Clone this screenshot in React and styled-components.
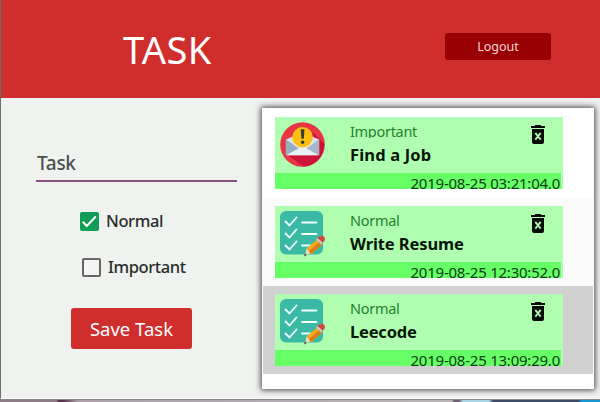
import React, { useState } from 'react';
import styled, { createGlobalStyle } from 'styled-components';

const GlobalStyle = createGlobalStyle`
  * { box-sizing: border-box; }
  body { margin: 0; overflow: hidden; font-family: "Noto Sans", "Open Sans", sans-serif; }
`;

const Screen = styled.div`
  width: 600px;
  height: 402px;
  display: flex;
  flex-direction: column;
  background: #f0f2f0;
  overflow: hidden;
`;

const Main = styled.div`
  flex: 1;
  min-height: 0;
  display: flex;
  flex-direction: column;
  border-left: 1px solid #687068;
  border-bottom: 1px solid #fafafa;
`;

const Header = styled.header`
  height: 98px;
  flex: none;
  display: flex;
  align-items: flex-start;
  justify-content: space-between;
  padding: 33px 49px 0 122px;
  background: #d02e2d;
`;

const Title = styled.h1`
  margin: 0;
  font-size: 38px;
  font-weight: 400;
  line-height: 32px;
  letter-spacing: 0.4px;
  color: #fff;
`;

const LogoutButton = styled.button`
  width: 106px;
  height: 27px;
  padding: 0;
  border: 0;
  border-radius: 3px;
  background: #990004;
  color: #f4d5d3;
  font: 400 12.5px/27px "Noto Sans", sans-serif;
`;

const Content = styled.main`
  flex: 1;
  min-height: 0;
  display: flex;
  align-items: flex-start;
  padding-top: 10px;
`;

const Form = styled.form`
  width: 260px;
  flex: none;
  display: flex;
  flex-direction: column;
  align-items: flex-start;
  padding: 39px 0 0 35px;
`;

const Field = styled.label`
  width: 201px;
  height: 35px;
  padding-left: 1px;
  border-bottom: 2px solid #87507f;
  color: #4b504d;
  font-size: 19px;
  font-weight: 500;
  line-height: 33px;
  letter-spacing: -0.3px;
`;

const Choice = styled.div`
  display: flex;
  align-items: center;
  gap: 7px;
  height: 24px;
  margin: ${(p) => p.$margin};
  color: #292e2b;
  font-size: 16.5px;
  font-weight: 500;
  line-height: 24px;
  letter-spacing: -0.4px;
`;

const Box = styled.span`
  width: 19px;
  height: 19px;
  flex: none;
  display: flex;
  border: ${(p) => (p.$checked ? '0' : '2px solid #656766')};
  border-radius: 2px;
  background: ${(p) => (p.$checked ? '#109d58' : '#f4f4f4')};
`;

const SaveButton = styled.button`
  width: 121px;
  height: 41px;
  margin: 29px 0 0 35px;
  padding: 0;
  border: 0;
  border-radius: 3px;
  background: #d02e2d;
  color: #fff;
  font: 400 18.5px/40px "Noto Sans", sans-serif;
`;

const Panel = styled.section`
  width: 332px;
  height: 281px;
  margin-left: 1px;
  border: 1px solid #fff;
  background: #fff;
  box-shadow: 0 0 6px 1px #3f3f3f;
`;

const Row = styled.div`
  height: 88px;
  padding: 8px 0 0 12px;
  background: ${(p) => p.$background};

  &:first-child { height: 89px; }
`;

const Card = styled.article`
  width: 288px;
  height: 72px;
  display: flex;
  flex-direction: column;
  background: #b0ffb0;
  overflow: hidden;
`;

const CardBody = styled.div`
  height: 56px;
  flex: none;
  display: flex;
  justify-content: space-between;
  padding: 5px 17px 0 5px;
`;

const Details = styled.div`
  flex: 1;
  margin-left: 24px;
`;

const Priority = styled.div`
  height: 16px;
  overflow: hidden;
  color: #20822b;
  font-size: 14.5px;
  line-height: 19px;
  letter-spacing: -0.3px;
`;

const TaskName = styled.div`
  height: 24px;
  margin-top: 5px;
  color: #07150a;
  font-size: 16.5px;
  font-weight: 700;
  line-height: 24px;
  letter-spacing: ${(p) => p.$spacing};
`;

const Stamp = styled.time`
  width: 286px;
  height: 16px;
  padding-right: 1px;
  background: #66ff66;
  color: #113d16;
  font-size: 15px;
  line-height: 20px;
  letter-spacing: -0.23px;
  text-align: right;
  white-space: nowrap;
`;

const DeleteButton = styled.button`
  width: 16px;
  height: 20px;
  margin-top: 3px;
  padding: 0;
  border: 0;
  background: none;
`;

const Icon = styled.svg`
  display: block;
  flex: none;
`;

const MailIcon = () => (
  <Icon width="46" height="46" viewBox="0 0 47 47">
    <circle cx="23" cy="23" r="22.8" fill="#e83545" />
    <path d="M33 10 45 22c1 13-9 23-21 23.5L7 33l29-12z" fill="#cf1238" />
    <path d="m6 18 9-4h16l9 4-17 14z" fill="#d8e4ed" />
    <path d="m13 17 20 0-2 9-8 4-8-4z" fill="#f6f7f5" />
    <path d="m6 18 17 11 17-11v16H6z" fill="#bccbd8" />
    <path d="m7 34 16-11 16 11z" fill="#e9f0f4" />
    <path d="m6 18 13 9L6 34z" fill="#94aec2" />
    <path d="m40 18-13 9 13 7z" fill="#a5b9ca" />
    <circle cx="23" cy="15.5" r="10.5" fill="#fdbf12" />
    <path d="M21.2 7.5h3.8l-.7 9.5h-2.4z" fill="#333d3c" />
    <circle cx="23.1" cy="20.6" r="1.8" fill="#333d3c" />
  </Icon>
);

const ChecklistIcon = () => (
  <Icon width="46" height="46" viewBox="0 0 46 46">
    <rect y="0" width="43" height="43.5" rx="6" fill="#3abaa6" />
    <path
      d="m5.5 10.5 4 4 7-8m-11 16 4 4 7-8m-11 16 4 4 7-8M22 11.5h14.5M22 23h14.5M22 34.5h11"
      fill="none"
      stroke="#edfffa"
      strokeWidth="1.8"
      strokeLinecap="round"
    />
    <path d="m24.5 45 2.5-8.5 5 5z" fill="#eed7ad" />
    <path d="m26.5 37.5 11-9.5 5 5-11 10z" fill="#f5a623" />
    <path d="m29 40 11-9.5 2.5 2.5-11 10z" fill="#dd7c14" />
    <path d="m36 28.5 2-1.7 5 5-2 1.7z" fill="#c5cec5" />
    <path d="m37.5 27 1.5-1.3q3-2 5 0 2 2 .3 4.3l-1.5 1.7z" fill="#d44744" />
    <path d="m24 45.5 1-3 2 1.5z" fill="#344440" />
  </Icon>
);

const TrashIcon = () => (
  <Icon width="16" height="20" viewBox="0 0 16 20">
    <path
      fillRule="evenodd"
      fill="#050a05"
      d="M4.5 1 5.5 0h5l1 1H15v2H1V1zM2 4h12v13q0 2-2 2H4q-2 0-2-2zm2.6 4.7L7 11.3l-2.4 2.6L6 15.3l2-2.5 2 2.5 1.4-1.4L9 11.3l2.4-2.6L10 7.3l-2 2.5-2-2.5z"
    />
  </Icon>
);

const CheckMark = () => (
  <Icon width="19" height="19" viewBox="0 0 19 19">
    <path d="m2.8 9.8 4 4.2 9-9.5" fill="none" stroke="#fff" strokeWidth="2" />
  </Icon>
);

const BottomEdge = styled.footer`
  height: 3px;
  flex: none;
  border-top: 1px solid #878787;
  background: linear-gradient(
    90deg,
    #8b7b84 0 56px, #59304e 59px 63px, #aba0a8 78px, #b9b4b6 452px,
    #6f6070 454px 459px, #a9d5e7 463px 489px, #3d4b68 493px 578px, #1898d3 582px
  );
`;

const tasks = [
  { priority: 'Important', name: 'Find a Job', spacing: '0.15px', time: '2019-08-25 03:21:04.0', background: '#fff' },
  { priority: 'Normal', name: 'Write Resume', spacing: '-0.1px', time: '2019-08-25 12:30:52.0', background: '#fafafa' },
  { priority: 'Normal', name: 'Leecode', spacing: '-0.2px', time: '2019-08-25 13:09:29.0', background: '#d0d0d0' },
];

export default function App() {
  const [priority, setPriority] = useState('Normal');
  return (
    <Screen>
      <GlobalStyle />
      <Main>
        <Header>
          <Title>TASK</Title>
          <LogoutButton>Logout</LogoutButton>
        </Header>
        <Content>
          <Form onSubmit={(e) => e.preventDefault()}>
            <Field>Task</Field>
            <Choice $margin="27px 0 0 44px" onClick={() => setPriority('Normal')}>
              <Box $checked={priority === 'Normal'}>{priority === 'Normal' && <CheckMark />}</Box>
              Normal
            </Choice>
            <Choice $margin="22px 0 0 46px" onClick={() => setPriority('Important')}>
              <Box $checked={priority === 'Important'}>{priority === 'Important' && <CheckMark />}</Box>
              Important
            </Choice>
            <SaveButton>Save Task</SaveButton>
          </Form>
          <Panel>
            {tasks.map((task) => (
              <Row key={task.time} $background={task.background}>
                <Card>
                  <CardBody>
                    {task.priority === 'Important' ? <MailIcon /> : <ChecklistIcon />}
                    <Details>
                      <Priority>{task.priority}</Priority>
                      <TaskName $spacing={task.spacing}>{task.name}</TaskName>
                    </Details>
                    <DeleteButton aria-label="Delete"><TrashIcon /></DeleteButton>
                  </CardBody>
                  <Stamp>{task.time}</Stamp>
                </Card>
              </Row>
            ))}
          </Panel>
        </Content>
      </Main>
      <BottomEdge />
    </Screen>
  );
}
